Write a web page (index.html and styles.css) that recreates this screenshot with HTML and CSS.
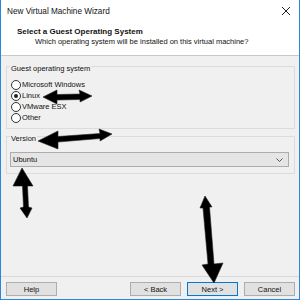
FILE: index.html
```html
<!DOCTYPE html>
<html lang="en">
<head>
    <meta charset="UTF-8">
    <meta name="viewport" content="width=device-width, initial-scale=1.0">
    <title>New Virtual Machine Wizard</title>
    <link rel="stylesheet" href="styles.css">
</head>
<body>
    <div class="window">
        <div class="titlebar">
            <span class="title-text">New Virtual Machine Wizard</span>
            <svg class="close-icon" width="10" height="10" viewBox="0 0 10 10">
                <path d="M1 1 L9 9 M9 1 L1 9" stroke="#222" stroke-width="1" fill="none"/>
            </svg>
        </div>

        <div class="header">
            <div class="header-title">Select a Guest Operating System</div>
            <div class="header-sub">Which operating system will be installed on this virtual machine?</div>
        </div>

        <div class="content">
            <fieldset class="group">
                <legend>Guest operating system</legend>
                <div class="radio-row"><span class="radio"></span>Microsoft Windows</div>
                <div class="radio-row"><span class="radio checked"></span>Linux</div>
                <div class="radio-row"><span class="radio"></span>VMware ESX</div>
                <div class="radio-row"><span class="radio"></span>Other</div>
            </fieldset>

            <fieldset class="group group-version">
                <legend>Version</legend>
                <div class="dropdown">
                    <span>Ubuntu</span>
                    <svg class="chevron" width="7" height="4" viewBox="0 0 7 4">
                        <path d="M0.5 0.5 L3.5 3.5 L6.5 0.5" stroke="#555" stroke-width="1" fill="none"/>
                    </svg>
                </div>
            </fieldset>
        </div>

        <div class="footer">
            <button class="btn">Help</button>
            <div class="spacer"></div>
            <button class="btn">&lt; Back</button>
            <button class="btn btn-default">Next &gt;</button>
            <button class="btn">Cancel</button>
        </div>

        <!-- annotation arrows drawn over the dialog -->
        <svg class="arrows" width="300" height="300" viewBox="0 0 300 300">
            <polygon points="43,97 57,90 57,94.5 80,94 79,90 92,96 80,102 80,99.5 57,100 57,104"/>
            <polygon points="38,141 58,131 58,136.5 100,133.5 99,129 112,134 100,141 100,138.5 58,142 58,149"/>
            <polygon points="22,168 33,186 27.5,186 28.5,207 32,208 27,218 20,208 23.5,207 22.5,186 13,186"/>
            <polygon points="205,196 212,207 209.5,207 214,264 223,263 214,283 202,265 208,264 203,208 200,208"/>
        </svg>
    </div>
</body>
</html>
```

FILE: styles.css
```css
body {
    margin: 0;
    font-family: "Liberation Sans", Arial, sans-serif;
    font-size: 7.5px;
    color: #111;
}
.window {
    position: relative;
    width: 300px;
    height: 300px;
    box-sizing: border-box;
    border: 1px solid #2b88d8;
    border-top: none;
    background-color: #f0f0f0;
    display: flex;
    flex-direction: column;
}
.titlebar {
    height: 22px;
    background-color: #fff;
    display: flex;
    align-items: center;
    padding: 0 8px 0 6px;
}
.title-text {
    font-size: 8.2px;
    flex: 1;
}
.header {
    height: 34px;
    box-sizing: border-box;
    background-color: #fff;
    border-bottom: 1px solid #c9c9c9;
    padding: 5px 0 0 16px;
}
.header-title {
    font-weight: bold;
    font-size: 8px;
    line-height: 10px;
}
.header-sub {
    line-height: 10px;
    margin-left: 18px;
}
.content {
    flex: 1;
    padding: 3px 4px 0 5px;
}
.group {
    margin: 0;
    padding: 6px 3px 5px 3px;
    border: 1px solid #dcdcdc;
}
.group legend {
    padding: 5px 1px 0 1px;
    line-height: 9px;
}
.radio-row {
    display: flex;
    align-items: center;
    height: 11px;
    margin-left: 1px;
}
.radio {
    width: 8px;
    height: 8px;
    border: 1px solid #333;
    border-radius: 50%;
    background-color: #fff;
    margin-right: 1px;
    display: flex;
    align-items: center;
    justify-content: center;
}
.radio.checked::after {
    content: "";
    width: 4px;
    height: 4px;
    border-radius: 50%;
    background-color: #222;
}
.group-version {
    padding: 9px 3px 6px 3px;
}
.dropdown {
    height: 15px;
    box-sizing: border-box;
    margin-right: 2px;
    border: 1px solid #acacac;
    background-color: #e5e5e5;
    display: flex;
    align-items: center;
    padding: 0 5px 0 2px;
}
.dropdown span {
    flex: 1;
}
.footer {
    border-top: 1px solid #d8d8d8;
    padding: 5px 4px 3px 5px;
    display: flex;
    gap: 6px;
}
.spacer {
    flex: 1;
}
.btn {
    width: 51px;
    height: 14px;
    padding: 0;
    font-family: "Liberation Sans", Arial, sans-serif;
    font-size: 7.5px;
    color: #111;
    background-color: #e1e1e1;
    border: 1px solid #adadad;
}
.btn-default {
    border-color: #0078d7;
}
.arrows {
    position: absolute;
    left: -1px;
    top: 0;
    pointer-events: none;
}
.arrows polygon {
    fill: #000;
    stroke: #222;
    stroke-width: 0.6;
    stroke-linejoin: round;
}
```
